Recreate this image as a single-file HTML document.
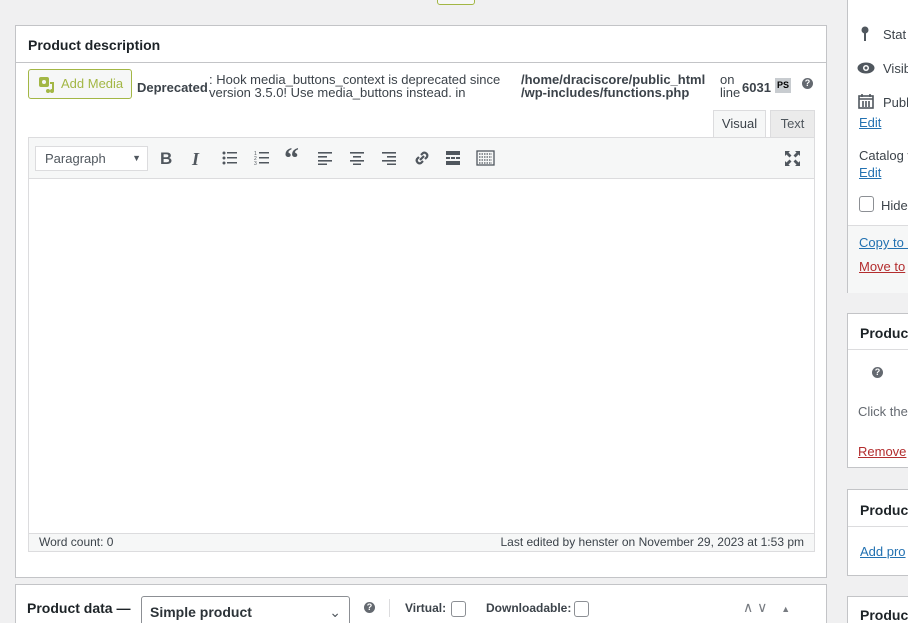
<!DOCTYPE html>
<html style="width:908px;height:623px;overflow:hidden"><head><style>
*{box-sizing:border-box;margin:0;padding:0}
html,body{width:908px;height:623px;overflow:hidden}
body{background:#f0f0f1;font-family:"Liberation Sans",sans-serif;font-size:13px;color:#3c434a;position:relative}
.abs{position:absolute}
.box{position:absolute;background:#fff;border:1px solid #c3c4c7}
a{color:#2271b1;text-decoration:underline}
.ic{position:absolute;fill:#50575e}
</style></head><body>
<div class="abs" style="left:437px;top:-4px;width:38px;height:9px;border:1px solid #a3b745;border-radius:3px;background:#f6f7f7"></div>

<div class="box" style="left:15px;top:25px;width:812px;height:553px">
  <div class="abs" style="left:0;top:0;width:810px;height:37px;border-bottom:1px solid #c3c4c7"></div>
  <div class="abs" style="left:12px;top:11px;font-weight:bold;font-size:14px;color:#1d2327">Product description</div>
  <div class="abs" style="left:12px;top:43px;width:104px;height:30px;border:1px solid #a3b745;border-radius:3px;background:#f6f7f7;color:#a3b745;font-size:13px;line-height:28px;padding-left:32px">Add Media</div>
  <svg class="abs" style="left:22px;top:50px" width="18" height="18" viewBox="0 0 18 18" fill="#a3b745"><rect x="1" y="1" width="10" height="10" rx="2"/><circle cx="6" cy="6" r="2" fill="#f6f7f7"/><path d="M12 6h4v9a2 2 0 1 1-2-2V8h-2z"/><circle cx="10" cy="15" r="2"/></svg>
  <div class="abs" style="left:121px;top:54px;font-weight:bold;color:#3c434a">Deprecated</div>
  <div class="abs" style="left:193px;top:47px;line-height:13px;width:300px">: Hook media_buttons_context is deprecated since version 3.5.0! Use media_buttons instead. in</div>
  <div class="abs" style="left:505px;top:47px;line-height:13px;font-weight:bold">/home/draciscore/public_html<br>/wp-includes/functions.php</div>
  <div class="abs" style="left:704px;top:47px;line-height:13px">on<br>line</div>
  <div class="abs" style="left:726px;top:54px;font-weight:bold">6031</div>
  <div class="abs" style="left:759px;top:52px;width:16px;height:15px;background:#c8ccd0;font-size:9px;font-weight:bold;color:#000;text-align:center;line-height:15px">PS</div>
  <div class="abs" style="left:786px;top:52px;width:11px;height:11px;border-radius:50%;background:#646970;color:#fff;font-size:9px;font-weight:bold;text-align:center;line-height:11px">?</div>
  <div class="abs" style="left:697px;top:84px;width:53px;height:28px;background:#f6f7f7;border:1px solid #dcdcde;border-bottom:none;text-align:center;line-height:26px">Visual</div>
  <div class="abs" style="left:754px;top:84px;width:45px;height:27px;background:#ebebeb;border:1px solid #dcdcde;border-bottom:none;text-align:center;line-height:26px;color:#50575e">Text</div>
  <div class="abs" style="left:12px;top:111px;width:787px;height:415px;border:1px solid #dcdcde;background:#fff">
    <div class="abs" style="left:0;top:0;width:785px;height:41px;background:#f6f7f7;border-bottom:1px solid #dcdcde"></div>
    <div class="abs" style="left:6px;top:8px;width:113px;height:25px;border:1px solid #dcdcde;background:#fff;padding-left:9px;line-height:23px;color:#50575e">Paragraph<span style="position:absolute;right:6px;font-size:9px">▼</span></div>
    <div class="abs" style="left:131px;top:11px;font-weight:bold;font-size:17px;color:#50575e">B</div>
    <div class="abs" style="left:163px;top:11px;font-style:italic;font-family:'Liberation Serif',serif;font-weight:bold;font-size:18px;color:#50575e">I</div>
    <svg class="ic" style="left:193px;top:13px" width="16" height="14"><circle cx="2" cy="2" r="1.5"/><circle cx="2" cy="7" r="1.5"/><circle cx="2" cy="12" r="1.5"/><rect x="5" y="1" width="10" height="1.5"/><rect x="5" y="6" width="10" height="1.5"/><rect x="5" y="11" width="10" height="1.5"/></svg>
    <svg class="ic" style="left:225px;top:13px" width="16" height="14"><text x="0" y="4" font-size="5">1</text><text x="0" y="9" font-size="5">2</text><text x="0" y="14" font-size="5">3</text><rect x="5" y="1" width="10" height="1.5"/><rect x="5" y="6" width="10" height="1.5"/><rect x="5" y="11" width="10" height="1.5"/></svg>
    <div class="abs" style="left:255px;top:4px;font-weight:bold;font-size:30px;color:#50575e;font-family:'Liberation Serif',serif">“</div>
    <svg class="ic" style="left:289px;top:13px" width="14" height="14"><rect x="0" y="1" width="14" height="1.6"/><rect x="0" y="5" width="9" height="1.6"/><rect x="0" y="9" width="14" height="1.6"/><rect x="0" y="12.5" width="9" height="1.6"/></svg>
    <svg class="ic" style="left:321px;top:13px" width="14" height="14"><rect x="0" y="1" width="14" height="1.6"/><rect x="3" y="5" width="8" height="1.6"/><rect x="0" y="9" width="14" height="1.6"/><rect x="3" y="12.5" width="8" height="1.6"/></svg>
    <svg class="ic" style="left:353px;top:13px" width="14" height="14"><rect x="0" y="1" width="14" height="1.6"/><rect x="5" y="5" width="9" height="1.6"/><rect x="0" y="9" width="14" height="1.6"/><rect x="5" y="12.5" width="9" height="1.6"/></svg>
    <svg class="abs" style="left:384px;top:11px" width="18" height="18" fill="none" stroke="#50575e" stroke-width="2.2"><path d="M8 6l2-2a3 3 0 0 1 4 4l-2 2M10 12l-2 2a3 3 0 0 1-4-4l2-2M7 11l4-4"/></svg>
    <svg class="ic" style="left:417px;top:13px" width="14" height="14"><rect x="0" y="0" width="14" height="4"/><rect x="0" y="6" width="4" height="2"/><rect x="5" y="6" width="4" height="2"/><rect x="10" y="6" width="4" height="2"/><rect x="0" y="10" width="14" height="4"/></svg>
    <svg class="abs" style="left:447px;top:12px" width="19" height="16" fill="none" stroke="#50575e" stroke-width="1.3"><rect x="1" y="1" width="17" height="14"/><path d="M3 4h13M3 7h13M3 10h13M3 13h13" stroke-dasharray="1.5 1"/></svg>
    <svg class="abs" style="left:755px;top:12px" width="17" height="17" fill="#50575e"><path d="M1 1h5L4.5 2.5 7.5 5.5 5.5 7.5 2.5 4.5 1 6zM16 1v5l-1.5-1.5-3 3-2-2 3-3L11 1zM1 16v-5l1.5 1.5 3-3 2 2-3 3L6 16zM16 16h-5l1.5-1.5-3-3 2-2 3 3L16 11z"/></svg>
    <div class="abs" style="left:0;top:395px;width:785px;height:18px;background:#f6f7f7;border-top:1px solid #dcdcde;font-size:12px;line-height:17px;padding:0 10px;color:#3c434a">Word count: 0<span style="float:right">Last edited by henster on November 29, 2023 at 1:53 pm</span></div>
  </div>
</div>

<div class="box" style="left:15px;top:584px;width:812px;height:39px;border-bottom:none;overflow:hidden">
  <div class="abs" style="left:11px;top:15px;font-weight:bold;font-size:14px;color:#1d2327">Product data —</div>
  <div class="abs" style="left:125px;top:11px;width:209px;height:32px;border:1px solid #8c8f94;border-radius:3px;padding-left:8px;line-height:30px;font-size:14px;font-weight:bold;color:#2c3338">Simple product<span style="position:absolute;right:8px;font-weight:normal;color:#50575e">⌄</span></div>
  <div class="abs" style="left:348px;top:17px;width:11px;height:11px;border-radius:50%;background:#646970;color:#fff;font-size:9px;font-weight:bold;text-align:center;line-height:11px">?</div>
  <div class="abs" style="left:373px;top:14px;width:1px;height:18px;background:#dcdcde"></div>
  <div class="abs" style="left:389px;top:16px;font-weight:bold;font-size:12px">Virtual:</div>
  <div class="abs" style="left:435px;top:16px;width:15px;height:16px;border:1px solid #8c8f94;border-radius:3px"></div>
  <div class="abs" style="left:470px;top:16px;font-weight:bold;font-size:12px">Downloadable:</div>
  <div class="abs" style="left:558px;top:16px;width:15px;height:16px;border:1px solid #8c8f94;border-radius:3px"></div>
  <div class="abs" style="left:727px;top:14px;color:#787c82;font-size:14px">∧ ∨ <span style="font-size:9px;margin-left:10px">▲</span></div>
</div>

<!-- sidebar -->
<div class="box" style="left:847px;top:-2px;width:70px;height:295px;background:#fff">
  <div class="abs" style="left:0;top:226px;width:70px;height:68px;background:#f6f7f7;border-top:1px solid #dcdcde"></div>
  <svg class="abs" style="left:13px;top:27px" width="10" height="16" fill="#50575e"><circle cx="4" cy="4" r="3.5"/><rect x="3" y="6" width="2" height="9"/></svg>
  <div class="abs" style="left:35px;top:28px">Stat</div>
  <svg class="abs" style="left:9px;top:62px" width="18" height="14"><ellipse cx="9" cy="7" rx="8.5" ry="5.5" fill="#50575e"/><circle cx="9" cy="7" r="3" fill="#fff"/><circle cx="9" cy="7" r="1.5" fill="#50575e"/></svg>
  <div class="abs" style="left:35px;top:62px">Visib</div>
  <svg class="abs" style="left:10px;top:94px" width="16" height="16" fill="none" stroke="#50575e" stroke-width="1.6"><rect x="1" y="3" width="14" height="12"/><path d="M4 1v3M12 1v3M1 6h14M5 8v6M8 8v6M11 8v6"/></svg>
  <div class="abs" style="left:35px;top:96px">Publ</div>
  <a class="abs" style="left:11px;top:116px">Edit</a>
  <div class="abs" style="left:11px;top:149px">Catalog v</div>
  <a class="abs" style="left:11px;top:166px">Edit</a>
  <div class="abs" style="left:11px;top:197px;width:15px;height:16px;border:1px solid #8c8f94;border-radius:3px;background:#fff"></div>
  <div class="abs" style="left:33px;top:199px">Hide</div>
  <a class="abs" style="left:11px;top:236px">Copy to a</a>
  <a class="abs" style="left:11px;top:260px;color:#b32d2e">Move to</a>
</div>
<div class="box" style="left:847px;top:313px;width:70px;height:155px">
  <div class="abs" style="left:0;top:0;width:70px;height:36px;border-bottom:1px solid #dcdcde"></div>
  <div class="abs" style="left:12px;top:11px;font-weight:bold;font-size:14px;color:#1d2327">Produc</div>
  <div class="abs" style="left:24px;top:53px;width:11px;height:11px;border-radius:50%;background:#646970;color:#fff;font-size:9px;font-weight:bold;text-align:center;line-height:11px">?</div>
  <div class="abs" style="left:10px;top:90px;color:#646970">Click the</div>
  <a class="abs" style="left:10px;top:130px;color:#b32d2e">Remove</a>
</div>
<div class="box" style="left:847px;top:489px;width:70px;height:87px">
  <div class="abs" style="left:0;top:0;width:70px;height:37px;border-bottom:1px solid #dcdcde"></div>
  <div class="abs" style="left:12px;top:12px;font-weight:bold;font-size:14px;color:#1d2327">Produc</div>
  <a class="abs" style="left:12px;top:54px">Add pro</a>
</div>
<div class="box" style="left:847px;top:596px;width:70px;height:27px;border-bottom:none;overflow:hidden">
  <div class="abs" style="left:12px;top:10px;font-weight:bold;font-size:14px;color:#1d2327">Produc</div>
</div>
</body></html>
